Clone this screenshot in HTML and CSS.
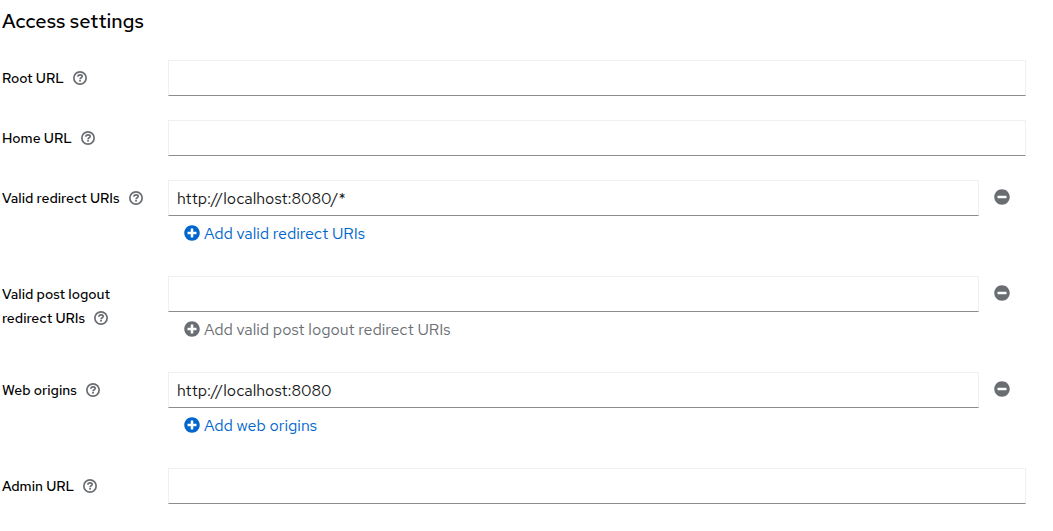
FILE: index.html
```html
<!DOCTYPE html>
<html lang="en">
<head>
<meta charset="utf-8">
<title>Access settings</title>
<link rel="stylesheet" href="styles.css">
</head>
<body>
<svg class="sprite" aria-hidden="true">
  <symbol id="help" viewBox="0 0 1024 1024"><path fill="currentColor" d="M512 64a448 448 0 1 1 0 896a448 448 0 1 1 0-896zm0 108a340 340 0 1 0 0 680a340 340 0 1 0 0-680z"/><path fill="none" stroke="currentColor" stroke-width="104" d="M375 430c5-80 60-118 140-118c80 0 138 40 138 105c0 85-138 80-138 170"/><circle cx="514" cy="690" r="64" fill="currentColor"/></symbol>
  <symbol id="minus" viewBox="0 0 512 512"><path fill="currentColor" d="M256 8C119 8 8 119 8 256s111 248 248 248 248-111 248-248S393 8 256 8zM124 296c-6.600 0-12-5.400-12-12v-56c0-6.600 5.400-12 12-12h264c6.600 0 12 5.400 12 12v56c0 6.600-5.400 12-12 12H124z"/></symbol>
  <symbol id="plus" viewBox="0 0 512 512"><path fill="currentColor" d="M256 8C119 8 8 119 8 256s111 248 248 248 248-111 248-248S393 8 256 8zm144 276c0 6.600-5.400 12-12 12h-92v92c0 6.600-5.400 12-12 12h-56c-6.600 0-12-5.400-12-12v-92h-92c-6.600 0-12-5.400-12-12v-56c0-6.600 5.400-12 12-12h92v-92c0-6.600 5.400-12 12-12h56c6.600 0 12 5.400 12 12v92h92c6.600 0 12 5.400 12 12v56z"/></symbol>
</svg>
<main class="settings">
  <h1 class="title">Access settings</h1>
  <form class="form">
    <div class="group">
      <div class="label"><label for="root">Root URL</label> <button class="help" type="button" aria-label="Help for Root URL"><svg><use href="#help"/></svg></button></div>
      <div class="control"><input class="field" id="root" type="text"></div>
    </div>
    <div class="group">
      <div class="label"><label for="home">Home URL</label> <button class="help" type="button" aria-label="Help for Home URL"><svg><use href="#help"/></svg></button></div>
      <div class="control"><input class="field" id="home" type="text"></div>
    </div>
    <div class="group">
      <div class="label"><label for="redirect">Valid redirect URIs</label> <button class="help" type="button" aria-label="Help for Valid redirect URIs"><svg><use href="#help"/></svg></button></div>
      <div class="control">
        <div class="row"><input class="field" id="redirect" type="text" value="http://localhost:8080/*"><button class="remove" type="button" aria-label="Remove"><svg><use href="#minus"/></svg></button></div>
        <button class="add" type="button"><svg><use href="#plus"/></svg>Add valid redirect URIs</button>
      </div>
    </div>
    <div class="group">
      <div class="label"><label for="logout">Valid post logout redirect URIs</label> <button class="help" type="button" aria-label="Help for Valid post logout redirect URIs"><svg><use href="#help"/></svg></button></div>
      <div class="control">
        <div class="row"><input class="field" id="logout" type="text"><button class="remove" type="button" aria-label="Remove"><svg><use href="#minus"/></svg></button></div>
        <button class="add" type="button" disabled><svg><use href="#plus"/></svg>Add valid post logout redirect URIs</button>
      </div>
    </div>
    <div class="group">
      <div class="label"><label for="origins">Web origins</label> <button class="help" type="button" aria-label="Help for Web origins"><svg><use href="#help"/></svg></button></div>
      <div class="control">
        <div class="row"><input class="field" id="origins" type="text" value="http://localhost:8080"><button class="remove" type="button" aria-label="Remove"><svg><use href="#minus"/></svg></button></div>
        <button class="add" type="button"><svg><use href="#plus"/></svg>Add web origins</button>
      </div>
    </div>
    <div class="group">
      <div class="label"><label for="admin">Admin URL</label> <button class="help" type="button" aria-label="Help for Admin URL"><svg><use href="#help"/></svg></button></div>
      <div class="control"><input class="field" id="admin" type="text"></div>
    </div>
  </form>
</main>
</body>
</html>
```
FILE: styles.css
```css
* { box-sizing: border-box; }
body { margin: 0; background: #fff; color: #000; font: 16px/24px "Red Hat Text", "Red Hat Display", Inter, sans-serif; }
button, input { font: inherit; }
button { margin: 0; padding: 0; border: 0; background: none; cursor: pointer; }
svg { fill: currentColor; }
.sprite { position: absolute; width: 0; height: 0; }
.settings { padding: 6px 27px 24px 2px; }
.title { margin: 0 0 24px; font-size: 20px; font-weight: 500; line-height: 30px; }
.form { display: grid; gap: 24px; }
.group { display: grid; grid-template-columns: 150px minmax(0, 1fr); column-gap: 16px; }
.label { padding-top: 6px; font-size: 14px; font-weight: 500; }
.help { margin-left: 5px; color: #6a6e73; vertical-align: -3px; line-height: 14px; }
.help svg { display: block; width: 16px; height: 16px; }
.row { display: flex; }
.field { flex: 1; display: block; width: 100%; min-width: 0; height: 36px; padding: 0 8px; border: 1px solid #f0f0f0; border-bottom-color: #8a8d90; border-radius: 0; background: #fff; color: #151515; font-weight: 400; outline: 0; }
.remove { display: flex; align-items: center; width: 47px; height: 34px; padding-left: 15px; color: #6a6e73; }
.remove svg { width: 16px; height: 16px; }
.add { display: flex; align-items: center; gap: 4px; padding: 6px 16px; color: #06c; font-weight: 400; }
.add svg { width: 16px; height: 16px; margin-bottom: 2px; }
.add:disabled { color: #6a6e73; cursor: default; }
```
